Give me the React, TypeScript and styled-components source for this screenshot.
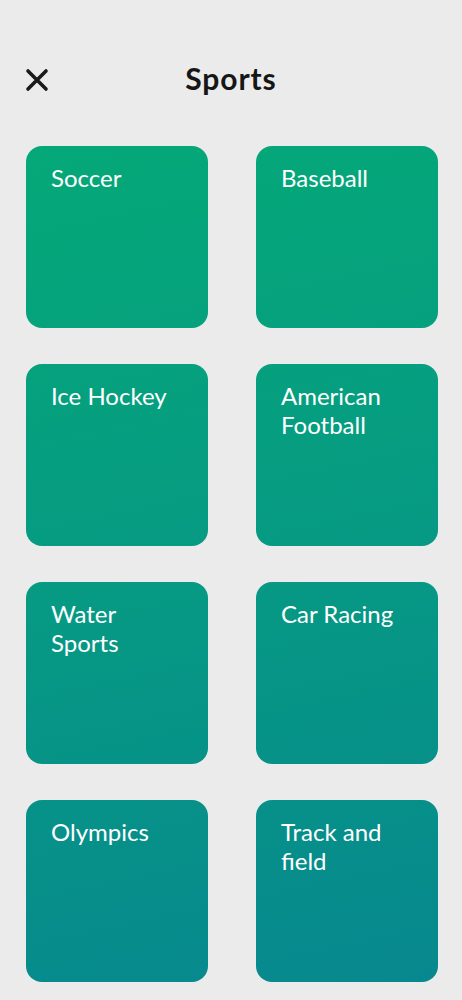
import React from "react";
import styled, { createGlobalStyle } from "styled-components";

const GlobalStyle = createGlobalStyle`
  html, body {
    margin: 0;
    padding: 0;
    background: #ebebeb;
  }
  body {
    font-family: "Lato", "Noto Sans", sans-serif;
    -webkit-font-smoothing: antialiased;
  }
`;

const Page = styled.div`
  width: 462px;
  min-height: 1000px;
  background: #ebebeb;
  box-sizing: border-box;
  padding-top: 57px;
`;

const Header = styled.header`
  position: relative;
  height: 44px;
  display: flex;
  align-items: center;
  justify-content: center;
`;

const CloseButton = styled.button`
  position: absolute;
  left: 24px;
  top: 10px;
  width: 26px;
  height: 26px;
  padding: 0;
  border: none;
  background: transparent;
  display: flex;
  align-items: center;
  justify-content: center;
  cursor: pointer;
`;

const Title = styled.h1`
  margin: 0 0 3px 0;
  font-family: "Lato", sans-serif;
  font-weight: 700;
  font-size: 30px;
  letter-spacing: 0.9px;
  color: #161616;
`;

const Grid = styled.div`
  display: grid;
  grid-template-columns: 182px 182px;
  column-gap: 48px;
  row-gap: 36px;
  padding: 45px 24px 18px 26px;
`;

const Tile = styled.button`
  height: 182px;
  border: none;
  border-radius: 16px;
  padding: 17px 22px 0 25px;
  text-align: left;
  display: flex;
  align-items: flex-start;
  background-image: linear-gradient(168deg, #04ab77 0%, #05a779 18%, #069a83 55%, #07878f 100%);
  background-attachment: fixed;
  background-size: 462px 1000px;
  color: #ffffff;
  font-family: "Lato", sans-serif;
  font-size: 24px;
  font-weight: 400;
  line-height: 29px;
  cursor: pointer;
`;

const sports = [
  "Soccer",
  "Baseball",
  "Ice Hockey",
  "American Football",
  "Water Sports",
  "Car Racing",
  "Olympics",
  "Track and field",
];

const Label: Record<string, React.ReactNode> = {
  "American Football": (
    <>
      American
      <br />
      Football
    </>
  ),
  "Water Sports": (
    <>
      Water
      <br />
      Sports
    </>
  ),
  "Track and field": (
    <>
      Track and
      <br />
      field
    </>
  ),
};

export default function App() {
  return (
    <>
      <GlobalStyle />
      <Page>
        <Header>
          <CloseButton aria-label="Close">
            <svg width="24" height="24" viewBox="0 0 24 24" fill="none">
              <path
                d="M3 3 L21 21 M21 3 L3 21"
                stroke="#1a1a1a"
                strokeWidth="3.6"
                strokeLinecap="round"
              />
            </svg>
          </CloseButton>
          <Title>Sports</Title>
        </Header>
        <Grid>
          {sports.map((s) => (
            <Tile key={s}>
              <span>{Label[s] ?? s}</span>
            </Tile>
          ))}
        </Grid>
      </Page>
    </>
  );
}
